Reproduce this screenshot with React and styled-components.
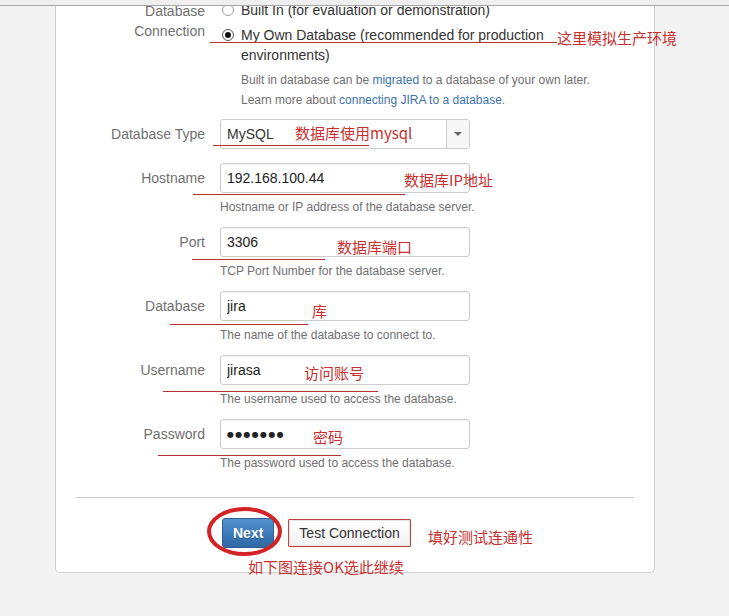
import React from "react";
import styled, { createGlobalStyle } from "styled-components";

const Global = createGlobalStyle`
  html, body {
    margin: 0;
    padding: 0;
    background: #f3f3f3;
  }
  * {
    box-sizing: border-box;
  }
`;

const Page = styled.div`
  position: relative;
  width: 729px;
  height: 616px;
  overflow: hidden;
  background: #f3f3f3;
  font-family: "Liberation Sans", Arial, sans-serif;
`;

const TopStrip = styled.div`
  height: 6px;
  background: #efefef;
  border-bottom: 1px solid #a6a6a6;
`;

const Panel = styled.div`
  width: 600px;
  margin-left: 55px;
  background: #fff;
  border: 1px solid #cfcfcf;
  border-top: none;
  border-radius: 0 0 5px 5px;
  overflow: hidden;
  padding-bottom: 24px;
`;

const Form = styled.div`
  margin-top: -6px;
`;

const Row = styled.div`
  display: grid;
  grid-template-columns: 149px 1fr;
  column-gap: 15px;
  margin-bottom: ${(p) => p.$gap || 10}px;
`;

const Label = styled.div`
  text-align: right;
  font-size: 14px;
  line-height: 20px;
  color: #707070;
  padding-top: ${(p) => (p.$top ? p.$top : 5)}px;
`;

const RadioGroup = styled.div`
  width: 400px;
  padding-left: 2px;
`;

const Option = styled.div`
  display: flex;
  align-items: flex-start;
  margin-bottom: 5px;
  font-size: 14px;
  line-height: 20px;
  color: #333;
`;

const Radio = styled.span`
  flex: none;
  width: 12px;
  height: 12px;
  margin: 4px 7px 0 0;
  border-radius: 50%;
  border: 1px solid ${(p) => (p.$on ? "#555" : "#999")};
  background: #fff;
  display: flex;
  align-items: center;
  justify-content: center;
  &::after {
    content: "";
    width: 6px;
    height: 6px;
    border-radius: 50%;
    background: ${(p) => (p.$on ? "#111" : "transparent")};
  }
`;

const OptionText = styled.span`
  width: 360px;
`;

const Help = styled.div`
  font-size: 12px;
  line-height: 20px;
  color: #707070;
  margin-top: ${(p) => p.$top || 0}px;
  padding-left: ${(p) => p.$indent || 0}px;
  white-space: nowrap;
`;

const Link = styled.span`
  color: #3b73af;
`;

const Field = styled.div`
  width: 250px;
`;

const Input = styled.input`
  display: block;
  width: 250px;
  height: 30px;
  margin: 0;
  padding: 0 6px;
  border: 1px solid #cccccc;
  border-radius: 3px;
  box-shadow: inset 0 1px 2px rgba(0, 0, 0, 0.06);
  background: #fff;
  font-family: ${(p) => (p.$secret ? '"DejaVu Sans", sans-serif' : '"Liberation Sans", Arial, sans-serif')};
  font-size: ${(p) => (p.$secret ? 8 : 14)}px;
  letter-spacing: ${(p) => (p.$secret ? 1.3 : 0)}px;
  color: #222;
  outline: none;
`;

const Select = styled.div`
  display: flex;
  width: 250px;
  height: 30px;
  border: 1px solid #cccccc;
  border-radius: 3px;
  background: #fff;
  overflow: hidden;
`;

const SelectValue = styled.div`
  flex: 1;
  padding-left: 6px;
  font-size: 14px;
  line-height: 28px;
  color: #333;
`;

const SelectArrow = styled.div`
  width: 23px;
  border-left: 1px solid #cccccc;
  background: #f7f7f7;
  display: flex;
  align-items: center;
  justify-content: center;
  &::after {
    content: "";
    border-left: 4px solid transparent;
    border-right: 4px solid transparent;
    border-top: 4px solid #666;
  }
`;

const Divider = styled.div`
  height: 1px;
  margin: 24px 20px 20px;
  background: #cccccc;
`;

const Buttons = styled.div`
  display: flex;
  align-items: center;
  gap: 14px;
  margin-left: 166px;
`;

const NextButton = styled.button`
  height: 30px;
  padding: 0 10px;
  border: 1px solid #2a5e94;
  border-radius: 3px;
  background: linear-gradient(#5492cf, #3a77b5 60%, #3069a4);
  color: #fff;
  font-family: "Liberation Sans", Arial, sans-serif;
  font-weight: bold;
  font-size: 14px;
  text-shadow: 0 1px 0 rgba(0, 0, 0, 0.25);
`;

const TestButton = styled.button`
  height: 28px;
  padding: 0 10px;
  border: 1px solid #c04040;
  border-radius: 1px;
  background: linear-gradient(#ffffff, #f2f2f2);
  box-shadow: inset 0 0 0 1px #e4e4e4;
  color: #333;
  font-family: "Liberation Sans", Arial, sans-serif;
  font-size: 14px;
`;

/* red markup drawn over the screenshot */
const Note = styled.div`
  position: absolute;
  left: ${(p) => p.$x}px;
  top: ${(p) => p.$y - 10}px;
  font-family: "Noto Sans CJK SC", sans-serif;
  font-size: 15px;
  line-height: 20px;
  color: #c8302f;
  white-space: nowrap;
`;

const Mark = styled.div`
  position: absolute;
  left: ${(p) => p.$x}px;
  top: ${(p) => p.$y}px;
  width: ${(p) => p.$w}px;
  height: 1px;
  background: #b8322f;
`;

const Ellipse = styled.div`
  position: absolute;
  left: 207px;
  top: 507px;
  width: 75px;
  height: 49px;
  border: 4px solid #d42326;
  border-radius: 50%;
`;

const fields = [
  { label: "Hostname", value: "192.168.100.44", help: "Hostname or IP address of the database server." },
  { label: "Port", value: "3306", help: "TCP Port Number for the database server." },
  { label: "Database", value: "jira", help: "The name of the database to connect to." },
  { label: "Username", value: "jirasa", help: "The username used to access the database." },
  { label: "Password", value: "●●●●●●●", secret: true, help: "The password used to access the database." },
];

const notes = [
  { x: 557, y: 38, text: "这里模拟生产环境", mx: 210, my: 42, mw: 347 },
  { x: 295, y: 133, text: "数据库使用mysql", mx: 213, my: 145, mw: 156 },
  { x: 404, y: 180, text: "数据库IP地址", mx: 193, my: 194, mw: 212 },
  { x: 337, y: 247, text: "数据库端口", mx: 192, my: 259, mw: 133 },
  { x: 312, y: 311, text: "库", mx: 170, my: 324, mw: 138 },
  { x: 304, y: 373, text: "访问账号", mx: 163, my: 391, mw: 215 },
  { x: 313, y: 437, text: "密码", mx: 158, my: 455, mw: 183 },
];

export default function App() {
  return (
    <Page>
      <Global />
      <TopStrip />
      <Panel>
        <Form>
          <Row $gap={9}>
            <Label $top={1}>
              Database
              <br />
              Connection
            </Label>
            <RadioGroup>
              <Option>
                <Radio />
                <OptionText>Built In (for evaluation or demonstration)</OptionText>
              </Option>
              <Option>
                <Radio $on />
                <OptionText>My Own Database (recommended for production environments)</OptionText>
              </Option>
              <Help $indent={19}>
                Built in database can be <Link>migrated</Link> to a database of your own later.
              </Help>
              <Help $indent={19}>
                Learn more about <Link>connecting JIRA to a database</Link>.
              </Help>
            </RadioGroup>
          </Row>
          <Row $gap={14}>
            <Label>Database Type</Label>
            <Field>
              <Select>
                <SelectValue>MySQL</SelectValue>
                <SelectArrow />
              </Select>
            </Field>
          </Row>
          {fields.map((f) => (
            <Row key={f.label}>
              <Label>{f.label}</Label>
              <Field>
                <Input readOnly $secret={f.secret} value={f.value} />
                <Help $top={4}>{f.help}</Help>
              </Field>
            </Row>
          ))}
        </Form>
        <Divider />
        <Buttons>
          <NextButton>Next</NextButton>
          <TestButton>Test Connection</TestButton>
        </Buttons>
      </Panel>

      {notes.map((n) => (
        <React.Fragment key={n.text}>
          <Mark $x={n.mx} $y={n.my} $w={n.mw} />
          <Note $x={n.x} $y={n.y}>
            {n.text}
          </Note>
        </React.Fragment>
      ))}
      <Ellipse />
      <Note $x={428} $y={537}>
        填好测试连通性
      </Note>
      <Note $x={248} $y={567}>
        如下图连接OK选此继续
      </Note>
    </Page>
  );
}
